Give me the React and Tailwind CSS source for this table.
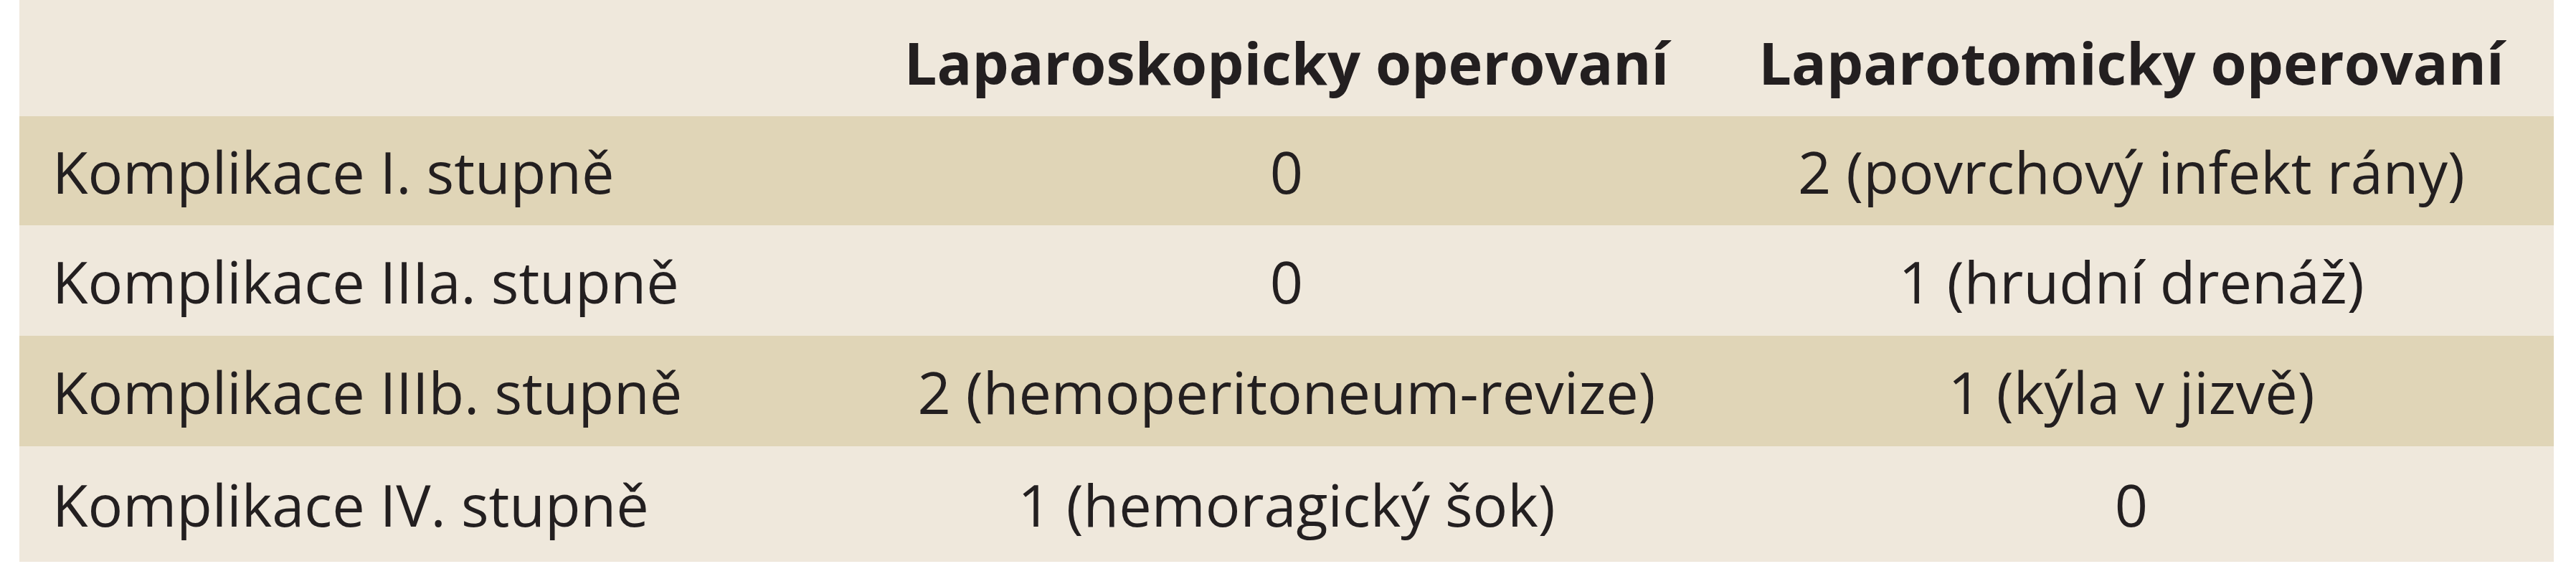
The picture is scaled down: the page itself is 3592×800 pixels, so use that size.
const rows = [
  { label: 'Komplikace I. stupně', lap: '0', open: '2 (povrchový infekt rány)', dark: true, h: 'h-[152px]' },
  { label: 'Komplikace IIIa. stupně', lap: '0', open: '1 (hrudní drenáž)', dark: false, h: 'h-[154px]' },
  { label: 'Komplikace IIIb. stupně', lap: '2 (hemoperitoneum-revize)', open: '1 (kýla v jizvě)', dark: true, h: 'h-[154px]' },
  { label: 'Komplikace IV. stupně', lap: '1 (hemoragický šok)', open: '0', dark: false, h: 'h-[161px]' },
];

export default function App() {
  return (
    <div className="w-[3592px] h-[800px] bg-white pl-[27px] font-['Open_Sans',sans-serif] text-[#231f20] text-[81px] leading-none">
      <div className="w-[3534px] flex flex-col">
        <div className="grid grid-cols-3 h-[162px] bg-[#efe8dc] font-bold pt-[11px]">
          <div />
          <div className="flex items-center justify-center">Laparoskopicky operovaní</div>
          <div className="flex items-center justify-center">Laparotomicky operovaní</div>
        </div>
        {rows.map((r) => (
          <div key={r.label} className={`grid grid-cols-3 ${r.h} ${r.dark ? 'bg-[#e0d5b7]' : 'bg-[#efe8dc]'}`}>
            <div className="flex items-center pl-[46px]">{r.label}</div>
            <div className="flex items-center justify-center">{r.lap}</div>
            <div className="flex items-center justify-center">{r.open}</div>
          </div>
        ))}
      </div>
    </div>
  );
}
